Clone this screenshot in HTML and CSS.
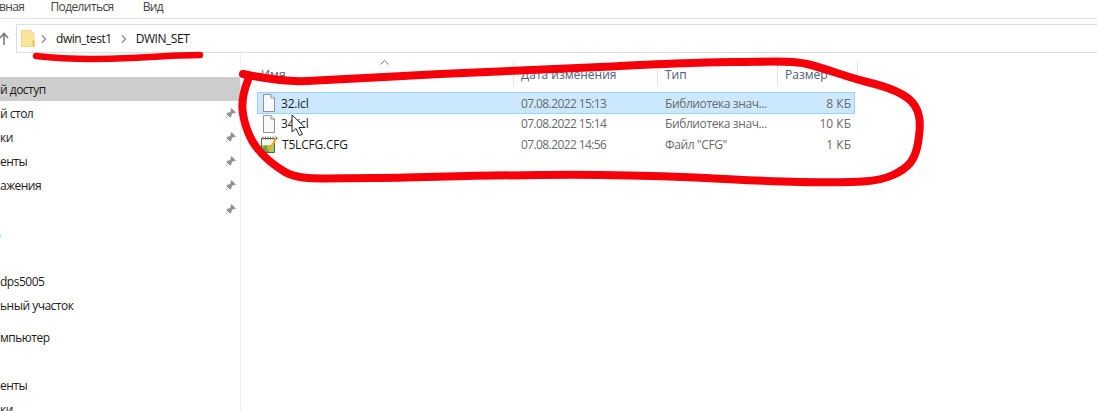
FILE: index.html
```html
<!DOCTYPE html>
<html lang="ru">
<head>
  <meta charset="UTF-8" />
  <title>DWIN_SET</title>
  <link rel="stylesheet" href="styles.css">
</head>
<body>

  <div class="tabs">
    <span class="tab first">вная</span>
    <span class="tab">Поделиться</span>
    <span class="tab">Вид</span>
  </div>

  <div class="address-row">
    <svg class="up" width="16" height="14" viewBox="0 0 16 14"><path d="M4 13V2M0 6L4 1.500 8 6" fill="none" stroke="#7a7a7a" stroke-width="1.600"/></svg>
    <div class="address">
      <svg class="folder" width="14" height="17" viewBox="0 0 14 17"><path d="M0.500 0.500h9l3.500 3v13h-12.500z" fill="#fce59b" stroke="#ecd68e"/><path d="M11.500 10h2v6.500h-2z" fill="#eec54e"/></svg>
      <svg class="chevron" width="6" height="8" viewBox="0 0 6 8"><path d="M1 0.500L4.500 4 1 7.500" fill="none" stroke="#8a8a8a" stroke-width="1.300"/></svg>
      <span class="crumb">dwin_test1</span>
      <svg class="chevron" width="6" height="8" viewBox="0 0 6 8"><path d="M1 0.500L4.500 4 1 7.500" fill="none" stroke="#8a8a8a" stroke-width="1.300"/></svg>
      <span class="crumb">DWIN_SET</span>
    </div>
  </div>

  <div class="content">
    <nav class="sidebar">
      <div class="group">
        <div class="nav-item selected"><span>й доступ</span></div>
        <div class="nav-item"><span>й стол</span><svg class="pin"><use href="#pin"/></svg></div>
        <div class="nav-item"><span>ки</span><svg class="pin"><use href="#pin"/></svg></div>
        <div class="nav-item"><span>енты</span><svg class="pin"><use href="#pin"/></svg></div>
        <div class="nav-item"><span>ажения</span><svg class="pin"><use href="#pin"/></svg></div>
        <div class="nav-item"><span></span><svg class="pin"><use href="#pin"/></svg></div>
        <div class="nav-item"><span class="cut">s</span></div>
        <div class="nav-item"></div>
        <div class="nav-item"><span>dps5005</span></div>
        <div class="nav-item"><span>ьный участок</span></div>
      </div>
      <div class="group">
        <div class="nav-item"><span>мпьютер</span></div>
        <div class="nav-item"></div>
        <div class="nav-item"><span>енты</span></div>
        <div class="nav-item"><span>ки</span></div>
      </div>
    </nav>

    <main class="files">
      <div class="head">
        <div class="col-head name-col">Имя
          <svg class="sort" width="9" height="5" viewBox="0 0 9 5"><path d="M0.500 4.500L4.500 0.500 8.500 4.500" fill="none" stroke="#777" /></svg>
        </div>
        <div class="col-head date-col">Дата изменения</div>
        <div class="col-head type-col">Тип</div>
        <div class="col-head size-col">Размер</div>
      </div>

      <div class="row selected">
        <div class="name-cell">
          <svg class="file" width="12" height="18" viewBox="0 0 12 18"><use href="#blank"/></svg>
          <span>32.icl</span>
        </div>
        <div class="cell date">07.08.2022 15:13</div>
        <div class="cell type">Библиотека знач...</div>
        <div class="cell size">8 КБ</div>
      </div>
      <div class="row">
        <div class="name-cell">
          <svg class="file" width="12" height="18" viewBox="0 0 12 18"><use href="#blank"/></svg>
          <span>34.icl</span>
        </div>
        <div class="cell date">07.08.2022 15:14</div>
        <div class="cell type">Библиотека знач...</div>
        <div class="cell size">10 КБ</div>
      </div>
      <div class="row">
        <div class="name-cell">
          <svg class="file cfg" width="17" height="17" viewBox="0 0 17 17">
            <path d="M0.500 2.500h13v14h-13z" fill="#f6f5ea" stroke="#5a5a55"/>
            <path d="M2 0.500v3M4.500 0.500v3M7 0.500v3M9.500 0.500v3M12 0.500v3" stroke="#6a6a66"/>
            <path d="M1 9h12v7h-12z" fill="#a5cf66"/>
            <path d="M1 12l4-3 3 3v4h-7z" fill="#5fa84a"/>
            <path d="M6 11l2 2.500L16 1.500" fill="none" stroke="#e2ad2a" stroke-width="2.200"/>
            <path d="M14.500 0.500L16.500 2.500" stroke="#444"/>
          </svg>
          <span>T5LCFG.CFG</span>
        </div>
        <div class="cell date">07.08.2022 14:56</div>
        <div class="cell type">Файл "CFG"</div>
        <div class="cell size">1 КБ</div>
      </div>
    </main>
  </div>

  <!-- красные пометки поверх скриншота -->
  <svg class="marks" width="1097" height="411" viewBox="0 0 1097 411">
    <path class="underline" d="M36 56C70 60 110 59 130 58S180 55 200 55" />
    <path d="M243 74C262 78 285 82 307 81S400 76 440 74S560 69 600 67S700 62 733 62S790 60 807 64S850 78 867 82S903 92 912 102S921 125 918 143S908 168 893 175S860 183 800 182S700 176 600 175S420 178 373 178S300 181 285 172S255 150 248 132S240 100 248 80" />
  </svg>
  <svg class="cursor" width="15" height="23" viewBox="0 0 15 23"><path d="M1 1v17l4-3.500 3.500 7 3-1.300-3.500-6.700h6z" fill="#fff" stroke="#222"/></svg>

  <svg class="defs" width="0" height="0">
    <symbol id="pin" viewBox="0 0 11 11">
      <path d="M6.500 0.500L10.500 4.500 9.500 5 8 4.800 6 7 6 9 5 9 2 6 2 5 4 5 6.200 3 6 1.500zM3.500 7.500L0.500 10.500" fill="#8f9299" stroke="#8f9299" stroke-width="0.700"/>
    </symbol>
    <symbol id="blank" viewBox="0 0 12 18">
      <path d="M0.500 0.500h7.500l3.500 3.500v13.500h-11z" fill="#f8f9fb" stroke="#8f949b"/>
      <path d="M8 0.500v3.500h3.500" fill="#eef0f3" stroke="#8f949b"/>
    </symbol>
  </svg>

</body>
</html>
```

FILE: styles.css
```css
html, body {
  margin: 0;
  height: 411px;
  overflow: hidden;
}

body {
  position: relative;
  background: #fff;
  color: #1a1a1a;
  font-family: 'Open Sans', 'Noto Sans', sans-serif;
  font-size: 12px;
}

.tabs {
  display: flex;
  height: 18px;
  border-bottom: 1px solid #e3e3e3;
  line-height: 13px;
  color: #444;
  letter-spacing: -0.6px;
}

.tab {
  margin-right: 29px;
}

.first {
  margin-left: -1px;
  margin-right: 26px;
}

.address-row {
  display: flex;
  align-items: center;
  height: 29px;
  margin-top: 5px;
}

.up {
  flex: none;
}

.address {
  flex: 1;
  display: flex;
  align-items: center;
  height: 29px;
  border: 1px solid #dedede;
  border-right: none;
  box-sizing: border-box;
  padding-left: 4px;
  color: #111;
  letter-spacing: -0.45px;
}

.chevron {
  margin: 0 9px 0 4px;
}

.folder {
  margin-right: 2px;
}

.crumb {
  margin-right: 5px;
}

.content {
  display: flex;
  height: 358px;
}

.sidebar {
  width: 240px;
  flex: none;
  padding-top: 24px;
  border-right: 1px solid #f0f0f0;
  letter-spacing: -0.5px;
}

.group {
  margin-bottom: 8px;
}

.nav-item {
  display: flex;
  align-items: center;
  justify-content: space-between;
  height: 24px;
  padding-right: 4px;
}

.nav-item.selected {
  background: #cdcdcd;
}

.cut {
  margin-left: -5px;
  color: #2a6fb0;
}

.pin {
  width: 11px;
  height: 11px;
}

.files {
  flex: 1;
  padding: 7px 0 0 16px;
}

.head {
  display: flex;
  height: 26px;
  margin-bottom: 6px;
  color: #4c607a;
}

.col-head {
  position: relative;
  box-sizing: border-box;
  padding: 6px 0 0 7px;
  border-right: 1px solid #e5e5e5;
}

.name-col { width: 257px; padding-left: 4px; }
.date-col { width: 144px; }
.type-col { width: 120px; }
.size-col { width: 80px; }

.sort {
  position: absolute;
  left: 123px;
  top: 0;
}

.row {
  display: flex;
  align-items: center;
  box-sizing: border-box;
  width: 598px;
  height: 21px;
  border: 1px solid transparent;
}

.row.selected {
  height: 22px;
  margin-bottom: -1px;
  background: #cce8ff;
  border-color: #99d1ff;
}

.name-cell {
  display: flex;
  align-items: center;
  width: 263px;
  padding-left: 5px;
  box-sizing: border-box;
  flex: none;
  letter-spacing: -0.2px;
}

.file {
  margin-right: 6px;
}

.cfg {
  margin: 0 4px 0 -2px;
}

.cell {
  color: #6a6a6a;
}

.date { width: 144px; letter-spacing: -0.6px; }
.type { width: 120px; letter-spacing: -0.4px; }

.size {
  flex: 1;
  text-align: right;
  padding-right: 3px;
}

.marks {
  position: absolute;
  left: 0;
  top: 0;
  fill: none;
  stroke: #f5000a;
  stroke-width: 8;
  stroke-linecap: round;
  stroke-linejoin: round;
}

.marks .underline {
  stroke-width: 6.500;
}

.cursor {
  position: absolute;
  left: 291px;
  top: 114px;
}

.defs {
  position: absolute;
}
```
